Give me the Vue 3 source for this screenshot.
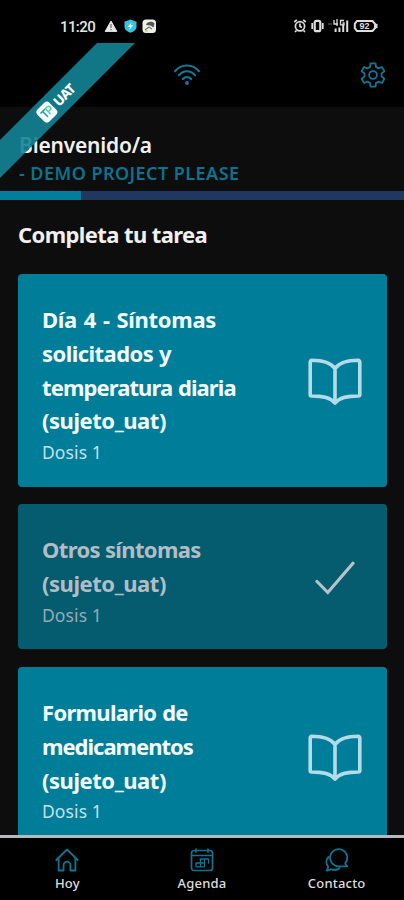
<script setup>
const tasks = [
  {
    lines: [
      { text: 'Día 4 - Síntomas', tracking: -0.3, gap: 1.4 },
      { text: 'solicitados y', tracking: -0.55, gap: 0.5 },
      { text: 'temperatura diaria', tracking: -0.9, gap: 0.8 },
      { text: '(sujeto_uat)', tracking: -0.45, gap: 0 }
    ],
    dose: 'Dosis 1',
    done: false
  },
  {
    lines: [
      { text: 'Otros síntomas', tracking: -0.65, gap: 0 },
      { text: '(sujeto_uat)', tracking: -0.45, gap: 0 }
    ],
    dose: 'Dosis 1',
    done: true
  },
  {
    lines: [
      { text: 'Formulario de', tracking: -0.7, gap: 0.8 },
      { text: 'medicamentos', tracking: -1, gap: 0 },
      { text: '(sujeto_uat)', tracking: -0.45, gap: 0 }
    ],
    dose: 'Dosis 1',
    done: false
  }
]
</script>

<template>
  <div class="phone">
    <div class="status">
      <span class="clock">11:20</span>
      <svg class="left-icons" width="54" height="16" viewBox="0 0 54 16">
        <path d="M7 3 12.800 13.400H1.200Z" fill="#e8e8e8" stroke="#e8e8e8" stroke-width="1" stroke-linejoin="round" />
        <path d="M7 6v4M7 11v1.3" stroke="#666" stroke-width="1.2" />
        <path d="M26.5 1.5 32.5 3.8v5c0 3-2.600 4.800-6 6-3.400-1.200-6-3-6-6v-5Z" fill="#35c3de" />
        <path d="m27.500 4.500-4 4.500h2.500l-.8 3 4-4.700h-2.500Z" fill="#e9ffff" />
        <rect x="38.500" y="1.500" width="13.500" height="13.500" rx="3.500" fill="#efefea" />
        <path d="M42 7c1-4 7-4 8.500-1.500l-1 4-3-2Z" fill="#555" />
        <path d="m41 12 4-3 3 2" fill="none" stroke="#777" stroke-width="1.200" />
        <circle cx="42.500" cy="13" r="1.300" fill="#d9dc62" />
      </svg>
      <svg class="right-icons" width="88" height="16" viewBox="0 0 88 16" fill="none" stroke="#dedede" stroke-width="1.700">
        <circle cx="7" cy="8.300" r="4.600" />
        <path d="M7 5.500v3l2 1M1.300 4 3.800 1.800M12.700 4 10.200 1.800M3.500 12.500 2 14M10.500 12.500 12 14" />
        <rect x="21.700" y="2.800" width="5.600" height="10.400" rx="1.800" stroke-width="2.200" />
        <path d="M19.200 5v6M29.800 5v6" />
        <path d="M42.600 14v-3.500M46.400 14V9.500M50.200 14V6.500M54.200 14V2.500" stroke-width="2" />
        <path d="M41 2v4h4M44 1v7M51 2.500h-3.500v4.300H51V5h-1.500" stroke-width="1.300" />
        <path d="M35 6h4" stroke="#666" stroke-width="1" />
        <path d="M64 3h15.500l2.500 2.800v4.400L79.500 13H64l-2.200-2.800V5.800Z" stroke-width="2" />
        <path d="M83.500 5.800v4.400" stroke-width="2" />
        <text x="66.600" y="11.300" class="battery">92</text>
      </svg>
    </div>

    <header class="topbar">
      <svg class="wifi" width="28" height="22" viewBox="0 0 28 22" fill="none" stroke="#12799a" stroke-width="2.100" stroke-linecap="round">
        <path d="M2 7.200C8.500-.4 19.500-.4 26 7.200M5.900 11.200c4.700-5.300 11.500-5.300 16.200 0M9.800 15c2.500-2.700 5.900-2.700 8.400 0" />
        <circle cx="14" cy="19" r="1.900" fill="#12799a" stroke="none" />
      </svg>
      <svg class="gear" width="26" height="26" viewBox="0 0 26 26" fill="none" stroke="#0c7794" stroke-width="1.800" stroke-linejoin="round">
        <path d="M10.100 4.900 10.500 1.300H15.500L15.900 4.900 18.500 6.400 21.900 5 24.400 9.300 21.500 11.500V14.500L24.400 16.700 21.900 21 18.500 19.600 15.900 21.100 15.500 24.700H10.500L10.100 21.100 7.500 19.600 4.100 21 1.600 16.700 4.500 14.500V11.500L1.600 9.300 4.100 5 7.500 6.400Z" />
        <circle cx="13" cy="13" r="3.900" />
      </svg>
    </header>

    <section class="welcome">
      <div class="hello"><span>Bienvenido/a</span></div>
      <div class="project"><span>- DEMO PROJECT PLEASE</span></div>
    </section>
    <div class="progress"><div class="bar"></div></div>

    <main class="content">
      <h1><span>Completa tu tarea</span></h1>
      <div class="list">
        <article v-for="(task, i) in tasks" :key="i" class="card" :class="{ done: task.done }">
          <div class="info">
            <div
              v-for="line in task.lines"
              :key="line.text"
              class="title"
              :style="{ letterSpacing: line.tracking + 'px', wordSpacing: line.gap + 'px' }"
            >{{ line.text }}</div>
            <div class="dose">{{ task.dose }}</div>
          </div>
          <svg v-if="task.done" class="check" width="40" height="34" viewBox="0 0 40 34" fill="none" stroke="#b7c3c8" stroke-width="3.200">
            <path d="M2 20.500 12.800 31.500 38 2.200" stroke-linecap="round" />
          </svg>
          <svg v-else class="book" width="54" height="48" viewBox="0 0 54 48" fill="none" stroke="#b3dbea" stroke-width="3.600" stroke-linejoin="round" stroke-linecap="round">
            <path d="M27 10.500C22.500 4.500 14.500 2.300 3.700 2.300A1.600 1.600 0 0 0 2.200 4v32.500c0 1 .6 1.500 1.500 1.500C14 38 22 39 27 45c5-6 13-7 23.300-7 .9 0 1.500-.5 1.500-1.500V4a1.600 1.600 0 0 0-1.500-1.700C39.500 2.300 31.500 4.500 27 10.500ZM27 10.500V44" />
          </svg>
        </article>
      </div>
    </main>

    <nav class="tabs">
      <div class="tab">
        <svg width="24" height="24" viewBox="0 0 24 24" fill="none" stroke="#0d7592" stroke-width="1.800" stroke-linejoin="round" stroke-linecap="round">
          <path d="M1.300 12 12 1.500 22.700 12M3.600 10v12.500h5V17a3.400 3.400 0 0 1 6.800 0v5.500h5V10" />
        </svg>
        <span class="hoy">Hoy</span>
      </div>
      <div class="tab">
        <svg width="24" height="24" viewBox="0 0 24 24" fill="none" stroke="#0d7592" stroke-width="1.700" stroke-linecap="round">
          <rect x="1.500" y="2.500" width="21" height="20" rx="2.500" />
          <path d="M2 7.500h20M6 1v3M18 1v3" />
          <path d="M10 11h8.500M18.500 11v4M14.500 11v7M10.500 11v4M6 15h8.500M6 18.800h8.500M6 15v3.800M10.500 15v3.800" stroke-width="1.300" />
        </svg>
        <span class="agenda">Agenda</span>
      </div>
      <div class="tab">
        <svg width="24" height="24" viewBox="0 0 24 24" fill="none" stroke="#0d7592" stroke-width="1.800" stroke-linejoin="round" stroke-linecap="round">
          <path d="M20.200 15.300A8.600 8.600 0 1 0 14 18.300h8.300c-1.300-.7-2-1.700-2.100-3Z" />
          <path d="M3.600 9C.8 11.700.8 15.500 3 18.200c.2 1.600-.2 3-1.300 4.300 2 0 3.300-.4 4.300-1.300 3 1.200 6.300.8 8.500-1.200" />
        </svg>
        <span class="contacto">Contacto</span>
      </div>
    </nav>

    <div class="ribbon">
      <div class="ribbon-label">
        <svg width="18" height="18" viewBox="0 0 18 18">
          <rect x="0.500" y="0.500" width="17" height="17" rx="4" fill="#f8ffff" />
          <path d="M3.500 5.500H10M6.500 5.500v7.500" fill="none" stroke="#1b9ba5" stroke-width="1.500" />
          <path d="M10.300 13V5.500h2.500a2 2 0 0 1 0 4.300h-2.500" fill="none" stroke="#4ed3a0" stroke-width="1.500" />
        </svg>
        <span>UAT</span>
      </div>
    </div>
  </div>
</template>

<style>
body { background: #000; }
</style>

<style scoped>
.phone {
  position: relative;
  width: 404px;
  height: 900px;
  overflow: hidden;
  display: flex;
  flex-direction: column;
  background: #0d0d0d;
  color: #f0f0f0;
  font-family: "Noto Sans", "Open Sans", sans-serif;
}
.phone * { box-sizing: border-box; }
svg { display: block; flex: none; }
.status {
  height: 43px;
  flex: none;
  display: flex;
  align-items: flex-start;
  padding: 18px 23px 0 60px;
  background: #000;
}
.clock {
  width: 44px;
  font: 500 15px/18px Roboto, sans-serif;
  letter-spacing: -0.600px;
  color: #e4e4e4;
}
.right-icons { margin-left: auto; }
.battery { font: 700 9px "Liberation Sans", sans-serif; fill: #dedede; stroke: none; }
.topbar {
  height: 64px;
  flex: none;
  display: flex;
  justify-content: space-between;
  align-items: flex-start;
  padding: 19px 18px 0 173px;
  background: #000;
}
.wifi { margin-top: 2px; }
.welcome { height: 84px; flex: none; padding: 24px 19px 0; }
.hello { height: 29px; font-size: 21px; font-weight: 600; line-height: 29px; letter-spacing: -0.200px; }
.project { height: 26px; font-size: 18px; font-weight: 600; line-height: 26px; letter-spacing: 0.450px; white-space: nowrap; color: #0c728f; }
.progress { height: 9px; flex: none; background: #203760; }
.bar { width: 81px; height: 9px; background: #007e9b; }
.content { flex: 1; min-height: 0; overflow: hidden; padding: 0 17px 0 18px; }
h1 { margin: 0; height: 74px; padding-top: 17px; font-size: 22px; font-weight: 700; line-height: 34px; letter-spacing: -0.600px; }
.list { display: flex; flex-direction: column; gap: 17.600px; }
.card {
  flex: none;
  display: flex;
  align-items: center;
  justify-content: space-between;
  padding: 29.300px 25px 20.500px 24px;
  border-radius: 4px;
  background: #007d99;
}
.title { height: 33.700px; font-size: 22px; font-weight: 700; line-height: 33.700px; white-space: nowrap; color: #f3fbff; }
.dose { height: 28px; font-size: 17.500px; line-height: 28px; letter-spacing: 0.100px; color: #c5e0ea; }
.book { margin-bottom: 6px; }
.check { margin-bottom: 7px; }
.card.done { background: #045c6e; padding-right: 32px; }
.done .title { color: #b3bdc5; }
.done .dose { color: #91acb7; }
.tabs {
  height: 65px;
  flex: none;
  display: grid;
  grid-template-columns: repeat(3, 1fr);
  border-top: 3px solid #b6b9b9;
  background: #000;
}
.tab { display: flex; flex-direction: column; align-items: center; padding-top: 9.500px; font-size: 13px; font-weight: 500; line-height: 18px; letter-spacing: 0.200px; color: #dedede; }
.tab span { margin-top: 2px; }
.ribbon {
  position: absolute;
  left: 0;
  top: 43px;
  width: 136px;
  height: 136px;
  background: rgba(19, 132, 150, 0.9);
  clip-path: polygon(97px 0, 135px 0, 0 135px, 0 97px);
}
.ribbon-label {
  position: absolute;
  left: 32px;
  top: 45px;
  width: 58px;
  height: 20px;
  display: flex;
  align-items: center;
  gap: 3px;
  transform: rotate(-45deg);
  font-size: 13.500px;
  font-weight: 800;
  line-height: 20px;
  letter-spacing: -0.700px;
  color: #fff;
}
</style>
